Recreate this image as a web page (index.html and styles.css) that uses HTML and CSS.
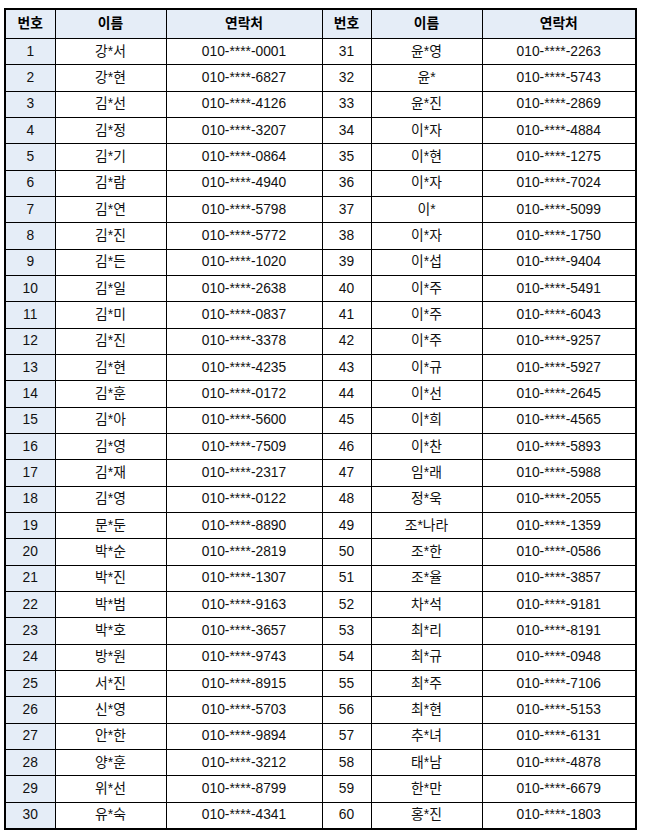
FILE: index.html
```html
<!DOCTYPE html>
<html lang="ko">
<head>
<meta charset="utf-8">
<link rel="stylesheet" href="styles.css">
</head>
<body>
<table class="list">
<colgroup>
<col class="c-no"><col class="c-name"><col class="c-tel"><col class="c-no2"><col class="c-name2"><col class="c-tel2">
</colgroup>
<thead>
<tr><th>번호</th><th>이름</th><th>연락처</th><th>번호</th><th>이름</th><th>연락처</th></tr>
</thead>
<tbody>
<tr><td class="no">1</td><td>강*서</td><td>010-****-0001</td><td>31</td><td>윤*영</td><td>010-****-2263</td></tr>
<tr><td class="no">2</td><td>강*현</td><td>010-****-6827</td><td>32</td><td>윤*</td><td>010-****-5743</td></tr>
<tr><td class="no">3</td><td>김*선</td><td>010-****-4126</td><td>33</td><td>윤*진</td><td>010-****-2869</td></tr>
<tr><td class="no">4</td><td>김*정</td><td>010-****-3207</td><td>34</td><td>이*자</td><td>010-****-4884</td></tr>
<tr><td class="no">5</td><td>김*기</td><td>010-****-0864</td><td>35</td><td>이*현</td><td>010-****-1275</td></tr>
<tr><td class="no">6</td><td>김*람</td><td>010-****-4940</td><td>36</td><td>이*자</td><td>010-****-7024</td></tr>
<tr><td class="no">7</td><td>김*연</td><td>010-****-5798</td><td>37</td><td>이*</td><td>010-****-5099</td></tr>
<tr><td class="no">8</td><td>김*진</td><td>010-****-5772</td><td>38</td><td>이*자</td><td>010-****-1750</td></tr>
<tr><td class="no">9</td><td>김*든</td><td>010-****-1020</td><td>39</td><td>이*섭</td><td>010-****-9404</td></tr>
<tr><td class="no">10</td><td>김*일</td><td>010-****-2638</td><td>40</td><td>이*주</td><td>010-****-5491</td></tr>
<tr><td class="no">11</td><td>김*미</td><td>010-****-0837</td><td>41</td><td>이*주</td><td>010-****-6043</td></tr>
<tr><td class="no">12</td><td>김*진</td><td>010-****-3378</td><td>42</td><td>이*주</td><td>010-****-9257</td></tr>
<tr><td class="no">13</td><td>김*현</td><td>010-****-4235</td><td>43</td><td>이*규</td><td>010-****-5927</td></tr>
<tr><td class="no">14</td><td>김*훈</td><td>010-****-0172</td><td>44</td><td>이*선</td><td>010-****-2645</td></tr>
<tr><td class="no">15</td><td>김*아</td><td>010-****-5600</td><td>45</td><td>이*희</td><td>010-****-4565</td></tr>
<tr><td class="no">16</td><td>김*영</td><td>010-****-7509</td><td>46</td><td>이*찬</td><td>010-****-5893</td></tr>
<tr><td class="no">17</td><td>김*재</td><td>010-****-2317</td><td>47</td><td>임*래</td><td>010-****-5988</td></tr>
<tr><td class="no">18</td><td>김*영</td><td>010-****-0122</td><td>48</td><td>정*욱</td><td>010-****-2055</td></tr>
<tr><td class="no">19</td><td>문*둔</td><td>010-****-8890</td><td>49</td><td>조*나라</td><td>010-****-1359</td></tr>
<tr><td class="no">20</td><td>박*순</td><td>010-****-2819</td><td>50</td><td>조*한</td><td>010-****-0586</td></tr>
<tr><td class="no">21</td><td>박*진</td><td>010-****-1307</td><td>51</td><td>조*율</td><td>010-****-3857</td></tr>
<tr><td class="no">22</td><td>박*범</td><td>010-****-9163</td><td>52</td><td>차*석</td><td>010-****-9181</td></tr>
<tr><td class="no">23</td><td>박*호</td><td>010-****-3657</td><td>53</td><td>최*리</td><td>010-****-8191</td></tr>
<tr><td class="no">24</td><td>방*원</td><td>010-****-9743</td><td>54</td><td>최*규</td><td>010-****-0948</td></tr>
<tr><td class="no">25</td><td>서*진</td><td>010-****-8915</td><td>55</td><td>최*주</td><td>010-****-7106</td></tr>
<tr><td class="no">26</td><td>신*영</td><td>010-****-5703</td><td>56</td><td>최*현</td><td>010-****-5153</td></tr>
<tr><td class="no">27</td><td>안*한</td><td>010-****-9894</td><td>57</td><td>추*녀</td><td>010-****-6131</td></tr>
<tr><td class="no">28</td><td>양*훈</td><td>010-****-3212</td><td>58</td><td>태*남</td><td>010-****-4878</td></tr>
<tr><td class="no">29</td><td>위*선</td><td>010-****-8799</td><td>59</td><td>한*만</td><td>010-****-6679</td></tr>
<tr><td class="no">30</td><td>유*숙</td><td>010-****-4341</td><td>60</td><td>홍*진</td><td>010-****-1803</td></tr>
</tbody>
</table>
</body>
</html>
```
FILE: styles.css
```css
html, body {
  margin: 0;
  padding: 0;
  background: #ffffff;
}
body {
  padding: 8px 0 0 4px;
  font-family: "Liberation Sans", "Noto Sans CJK KR", sans-serif;
  font-size: 13.8px;
  color: #111111;
}
.list {
  border-collapse: collapse;
  table-layout: fixed;
  width: 633px;
  height: 822px;
  border: 2px solid #000000;
}
.c-no { width: 50px; }
.c-name { width: 111px; }
.c-tel { width: 156px; }
.c-no2 { width: 49px; }
.c-name2 { width: 111px; }
.c-tel2 { width: 154px; }
.list th, .list td {
  border: 1px solid #000000;
  text-align: center;
  vertical-align: middle;
  padding: 0;
  line-height: 16px;
}
.list th {
  background: #e5edf7;
  font-weight: bold;
  height: 28px;
  color: #000000;
}
.list td {
  height: 25px;
}
.list td.no {
  background: #e5edf7;
}
```
